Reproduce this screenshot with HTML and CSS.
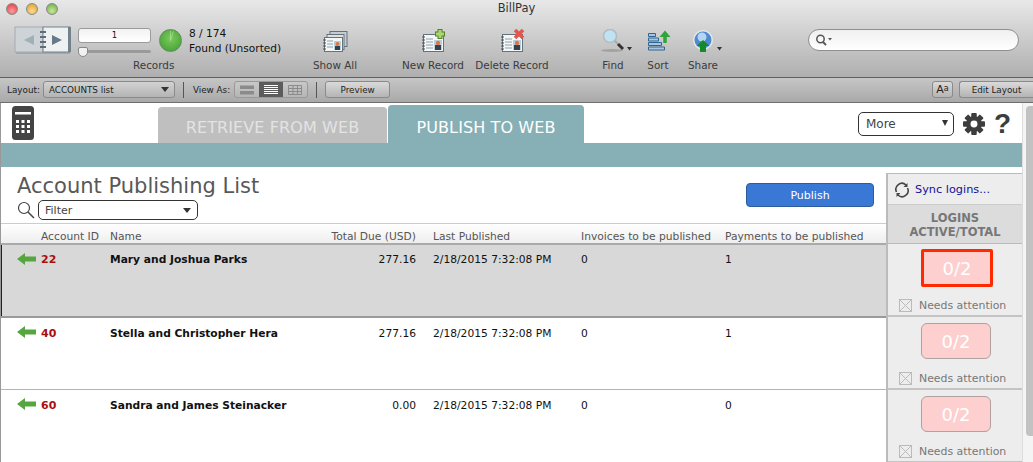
FILE: index.html
```html
<!DOCTYPE html>
<html lang="en">
<head>
<meta charset="utf-8">
<title>BillPay</title>
<link rel="stylesheet" href="styles.css">
</head>
<body>
<header class="titlebar">
  <div class="lights"><i class="light red"></i><i class="light amber"></i><i class="light green"></i></div>
  <div class="title">BillPay</div>
  <div class="tools">
    <svg class="book" viewBox="0 0 58 28"><path d="M2 26h54v2H2z" fill="#8f979c" opacity=".6"/><rect x="1" y="1" width="28" height="25" fill="#cdd3d6" stroke="#a3acb3"/><rect x="29" y="1" width="27" height="25" fill="#eef1f2" stroke="#71828d"/><rect x="54" y="1" width="3" height="25" fill="#71828d"/><path d="M20 9 10 14l10 5z" fill="#a3afb7"/><path d="M38 9l10 5-10 5z" fill="#66798a"/><path d="M26 6h6M26 11h6M26 16h6M26 21h6" stroke="#5f6d77" stroke-width="2"/></svg>
    <div class="rec-col">
      <div class="rec-input">1</div>
      <div class="slider"><i class="knob"></i></div>
      <div class="tool-label rec-label">Records</div>
    </div>
    <div class="pie"><svg class="pie-line" viewBox="0 0 22 22"><path d="M11 11V1M11 11l3-9.500" stroke="#a8e08c" stroke-width=".8" fill="none"/></svg></div>
    <div class="found"><div>8 / 174</div><div>Found (Unsorted)</div></div>
    <div class="tool t-showall">
      <svg class="ticon" viewBox="0 0 26 24"><rect x="8" y="2.500" width="17" height="15" fill="#c6ccd0" stroke="#66727a"/><rect x="5" y="5.500" width="17" height="15" fill="#dde1e3" stroke="#66727a"/><rect x="2.500" y="8.500" width="18" height="14" fill="#f5f6f6" stroke="#66727a"/><path d="M1 11h3M1 14h3M1 17h3M1 20h3" stroke="#47535c"/><path d="M5 12h6M5 15h6M5 18h6" stroke="#8aa0b0"/><rect x="12" y="12" width="7" height="9" fill="#b9cfdc"/><rect x="13" y="17" width="5" height="4" fill="#33424f"/><circle cx="15.500" cy="15" r="2" fill="#d9794a"/></svg>
      <span class="tool-label">Show All</span>
    </div>
    <div class="tool t-new">
      <svg class="ticon" viewBox="0 0 26 24"><rect x="3.500" y="5.500" width="20" height="17" fill="#f5f6f6" stroke="#66727a"/><path d="M2 8h3M2 11h3M2 14h3M2 17h3M2 20h3" stroke="#47535c"/><path d="M6 10h7M6 13h7M6 16h7M6 19h7" stroke="#8aa0b0"/><rect x="14" y="11" width="8" height="10" fill="#b9cfdc"/><rect x="15" y="16" width="6" height="5" fill="#33424f"/><circle cx="18" cy="14" r="2.200" fill="#d9794a"/><path d="M20 0v10M15 5h10" stroke="#5a7f2c" stroke-width="5"/><path d="M20 1v8M16 5h8" stroke="#a7d86e" stroke-width="3"/></svg>
      <span class="tool-label">New Record</span>
    </div>
    <div class="tool t-del">
      <svg class="ticon" viewBox="0 0 26 24"><rect x="3.500" y="5.500" width="20" height="17" fill="#f5f6f6" stroke="#66727a"/><path d="M2 8h3M2 11h3M2 14h3M2 17h3M2 20h3" stroke="#47535c"/><path d="M6 10h7M6 13h7M6 16h7M6 19h7" stroke="#8aa0b0"/><rect x="14" y="11" width="8" height="10" fill="#b9cfdc"/><rect x="15" y="16" width="6" height="5" fill="#33424f"/><circle cx="18" cy="14" r="2.200" fill="#d9794a"/><path d="m16 1 8 8M24 1l-8 8" stroke="#e2564c" stroke-width="3.600"/></svg>
      <span class="tool-label">Delete Record</span>
    </div>
    <div class="tool t-find">
      <svg class="ticon wide" viewBox="0 0 38 24"><ellipse cx="18" cy="21.500" rx="11" ry="1.500" fill="#8c8c8c" opacity=".6"/><circle cx="16" cy="7" r="6.500" fill="#bfe3f2" stroke="#b4bcc0" stroke-width="1.600"/><path d="m21 12 3 3" stroke="#aaa" stroke-width="2"/><path d="m24 15 5 5" stroke="#333" stroke-width="3"/><path d="M33 18h5l-2.500 3.500z" fill="#333"/></svg>
      <span class="tool-label">Find</span>
    </div>
    <div class="tool t-sort">
      <svg class="ticon" viewBox="0 0 26 24"><path d="M3.500 4.500h7v3h-7zM3.500 9h10v3h-10zM3.500 13.500h13v3h-13zM3.500 18h16v3h-16z" fill="#a6c6e4" stroke="#33668f"/><path d="M20 14V5" stroke="#2ea53a" stroke-width="3.500"/><path d="M14.500 8 20 1.500 25.500 8z" fill="#2ea53a"/></svg>
      <span class="tool-label">Sort</span>
    </div>
    <div class="tool t-share">
      <svg class="ticon wide" viewBox="0 0 38 24"><circle cx="19" cy="11" r="10" fill="#e4e8ea"/><circle cx="19" cy="11" r="8.500" fill="#4f8ad0"/><circle cx="18" cy="8" r="4.500" fill="#b5d6f2"/><path d="M19 11l-6.500 6h3.500v6h6v-6h3.500z" fill="#148a2a"/><path d="M33 18h5l-2.500 3.500z" fill="#333"/></svg>
      <span class="tool-label">Share</span>
    </div>
    <div class="search">
      <svg class="search-ico" viewBox="0 0 18 12"><circle cx="5.500" cy="5" r="3.700" fill="none" stroke="#555" stroke-width="1.500"/><path d="m8 8 3 3" stroke="#555" stroke-width="1.800"/><path d="M13 4h4l-2 2.500z" fill="#555"/></svg>
    </div>
  </div>
</header>

<nav class="layoutbar">
  <span class="lb-text">Layout:</span>
  <div class="lb-select"><span>ACCOUNTS list</span><i class="caret"></i></div>
  <i class="sep"></i>
  <span class="lb-text">View As:</span>
  <div class="seg">
    <span class="seg-b"><svg viewBox="0 0 14 10" class="seg-i"><path d="M0 .500h14v3.500H0zM0 6h14v3.500H0z" fill="#8b8b8b"/></svg></span>
    <span class="seg-b on"><svg viewBox="0 0 14 10" class="seg-i"><path d="M0 .500h14M0 2.500h14M0 4.500h14M0 6.500h14M0 8.500h14" stroke="#fff"/></svg></span>
    <span class="seg-b"><svg viewBox="0 0 14 10" class="seg-i"><path d="M.500.500h13v9H.500zM.500 3.500h13M.500 6.500h13M5 .500v9M9.500.500v9" fill="none" stroke="#8b8b8b"/></svg></span>
  </div>
  <i class="sep"></i>
  <div class="lb-btn preview">Preview</div>
  <div class="lb-right">
    <div class="lb-btn aa">A<span class="aa-small">a</span></div>
    <div class="lb-btn edit">Edit Layout</div>
  </div>
</nav>

<div class="content">
  <main class="page">
    <div class="tabrow">
      <svg class="calc" viewBox="0 0 22 34"><rect width="22" height="34" rx="3.500" fill="#444"/><rect x="3" y="6" width="16" height="2.500" fill="#fff"/><g fill="#fff"><rect x="4" y="14" width="3" height="3"/><rect x="9.500" y="14" width="3" height="3"/><rect x="15" y="14" width="3" height="3"/><rect x="4" y="19" width="3" height="3"/><rect x="9.500" y="19" width="3" height="3"/><rect x="15" y="19" width="3" height="3"/><rect x="4" y="24" width="3" height="3"/><rect x="9.500" y="24" width="3" height="3"/><rect x="15" y="24" width="3" height="3"/></g></svg>
      <div class="tab off">RETRIEVE FROM WEB</div>
      <div class="tab active">PUBLISH TO WEB</div>
      <div class="top-right">
        <div class="more"><span>More</span><i class="caret"></i></div>
        <svg class="gear" viewBox="0 0 24 24"><g fill="#3d3d3d"><rect x="9" y="0" width="6" height="24" rx="1"/><rect x="9" y="0" width="6" height="24" rx="1" transform="rotate(45 12 12)"/><rect x="9" y="0" width="6" height="24" rx="1" transform="rotate(90 12 12)"/><rect x="9" y="0" width="6" height="24" rx="1" transform="rotate(135 12 12)"/><circle cx="12" cy="12" r="8.500"/></g><circle cx="12" cy="12" r="3.800" fill="#fff"/></svg>
        <span class="help">?</span>
      </div>
    </div>
    <div class="band"></div>
    <div class="listhead">
      <div class="lh-left">
        <h1>Account Publishing List</h1>
        <div class="filter-row">
          <svg class="mag" viewBox="0 0 18 18"><circle cx="7" cy="7" r="5.500" fill="none" stroke="#444" stroke-width="1.200"/><path d="m11 11 6 6" stroke="#444" stroke-width="1.500"/></svg>
          <div class="filter"><span>Filter</span><i class="caret"></i></div>
        </div>
      </div>
      <div class="publish">Publish</div>
    </div>
    <div class="row cols head">
      <span class="c-id">Account ID</span><span class="c-name">Name</span><span class="c-due">Total Due (USD)</span><span class="c-date">Last Published</span><span class="c-inv">Invoices to be published</span><span class="c-pay">Payments to be published</span>
    </div>
    <div class="row cols rec sel">
      <svg class="arrow" viewBox="0 0 19 12"><path d="M0 6 8 0v3.500h11v5H8V12z" fill="#55a63e"/></svg>
      <span class="c-id num">22</span><span class="c-name nm">Mary and Joshua Parks</span><span class="c-due">277.16</span><span class="c-date">2/18/2015 7:32:08 PM</span><span class="c-inv">0</span><span class="c-pay">1</span>
    </div>
    <div class="row cols rec">
      <svg class="arrow" viewBox="0 0 19 12"><path d="M0 6 8 0v3.500h11v5H8V12z" fill="#55a63e"/></svg>
      <span class="c-id num">40</span><span class="c-name nm">Stella and Christopher Hera</span><span class="c-due">277.16</span><span class="c-date">2/18/2015 7:32:08 PM</span><span class="c-inv">0</span><span class="c-pay">1</span>
    </div>
    <div class="row cols rec last">
      <svg class="arrow" viewBox="0 0 19 12"><path d="M0 6 8 0v3.500h11v5H8V12z" fill="#55a63e"/></svg>
      <span class="c-id num">60</span><span class="c-name nm">Sandra and James Steinacker</span><span class="c-due">0.00</span><span class="c-date">2/18/2015 7:32:08 PM</span><span class="c-inv">0</span><span class="c-pay">0</span>
    </div>
    <aside class="side">
      <div class="sync">
        <svg class="sync-i" viewBox="0 0 16 16"><path d="M2.500 10A6 6 0 0 1 12 3M13.500 6A6 6 0 0 1 4 13" fill="none" stroke="#444" stroke-width="1.600"/><path d="M13.500 1v4h-4zM2.500 15v-4h4z" fill="#444"/></svg>
        <span>Sync logins...</span>
      </div>
      <div class="logins">LOGINS<br>ACTIVE/TOTAL</div>
      <div class="cell">
        <div class="badge focus">0/2</div>
        <div class="need"><i class="cb"></i>Needs attention</div>
      </div>
      <div class="cell">
        <div class="badge">0/2</div>
        <div class="need"><i class="cb"></i>Needs attention</div>
      </div>
      <div class="cell">
        <div class="badge">0/2</div>
        <div class="need"><i class="cb"></i>Needs attention</div>
      </div>
    </aside>
  </main>
  <div class="scroll"><i class="thumb"></i></div>
</div>
</body>
</html>
```
FILE: styles.css
```css
* { box-sizing: border-box; }
html, body { margin: 0; padding: 0; }
body { width: 1033px; height: 462px; overflow: hidden; background: #fff; font-family: "DejaVu Sans", "Open Sans", sans-serif; color: #111; }
i { display: block; font-style: normal; }

.titlebar { position: relative; height: 78px; background: linear-gradient(#e8e8e8, #afafaf); border-bottom: 1px solid #5f5f5f; }
.lights { position: absolute; left: 6px; top: 3px; display: flex; gap: 8px; }
.light { width: 12px; height: 12px; border-radius: 50%; border: 1px solid #8a8a8a; }
.red { background: radial-gradient(circle at 50% 70%, #ff9a9a, #d93a40); }
.amber { background: radial-gradient(circle at 50% 70%, #ffdc8a, #d89a2a); }
.green { background: radial-gradient(circle at 50% 70%, #c6e89a, #6aa83e); }
.title { text-align: center; font-size: 11.500px; line-height: 17px; color: #333; }
.tools { position: relative; height: 60px; }
.book { position: absolute; left: 14px; top: 9px; width: 58px; height: 28px; }
.rec-col { position: absolute; left: 78px; top: 11px; width: 73px; }
.rec-input { height: 15px; background: linear-gradient(#f2f2f2, #fff); border: 1px solid #9a9a9a; border-radius: 3px; font-size: 8.500px; line-height: 13px; text-align: center; }
.slider { position: relative; height: 3px; margin-top: 7px; background: #9a9a9a; border-radius: 2px; }
.knob { position: absolute; left: 0; top: -3px; width: 10px; height: 10px; background: #f2f2f2; border: 1px solid #888; border-radius: 2px 2px 5px 5px; }
.tool-label { font-size: 10.400px; line-height: 14px; color: #3b3b3b; white-space: nowrap; }
.rec-label { position: absolute; left: 55px; top: 30px; }
.pie { position: absolute; left: 159px; top: 12px; width: 23px; height: 23px; border-radius: 50%; background: radial-gradient(circle at 50% 40%, #7ccb5c, #3d9a33); border: 1px solid #5e8f56; }
.pie-line { display: block; width: 21px; height: 21px; }
.found { position: absolute; left: 189px; top: 9px; font-size: 10.600px; line-height: 15px; color: #111; }
.tool { position: absolute; top: 12px; display: flex; flex-direction: column; align-items: center; gap: 5px; width: 90px; transform: translateX(-45px); }
.ticon { width: 26px; height: 24px; }
.ticon.wide { width: 38px; height: 24px; }
.t-showall { left: 335px; }
.t-new { left: 433px; }
.t-del { left: 512px; }
.t-find { left: 613px; }
.t-sort { left: 658px; }
.t-share { left: 703px; }
.search { position: absolute; left: 808px; top: 12px; width: 211px; height: 22px; border: 1px solid #8f8f8f; border-radius: 11px; background: linear-gradient(#f0f0f0, #fff); padding: 4px 6px; }
.search-ico { display: block; width: 18px; height: 12px; }

.layoutbar { display: flex; align-items: center; height: 25px; padding: 0 0 1px 7px; background: linear-gradient(#c6c6c6, #a9a9a9); border-bottom: 1px solid #6e6e6e; font-size: 8.800px; color: #222; }
.lb-text { white-space: nowrap; }
.lb-select { display: flex; align-items: center; justify-content: space-between; width: 132px; height: 17px; margin-left: 3px; padding: 0 5px; border: 1px solid #8a8a8a; border-radius: 3px; background: linear-gradient(#d2d2d2, #b4b4b4); }
.caret { width: 0; height: 0; border-left: 4px solid transparent; border-right: 4px solid transparent; border-top: 5px solid #333; }
.sep { width: 1px; height: 16px; background: #555; margin: 0 9px 0 8px; }
.seg { display: flex; width: 74px; height: 17px; margin-left: 4px; border: 1px solid #999; border-radius: 3px; overflow: hidden; background: linear-gradient(#c8c8c8, #b6b6b6); }
.seg-b { flex: 1; display: flex; align-items: center; justify-content: center; }
.seg-b.on { background: #5c5c5c; }
.seg-i { width: 14px; height: 10px; }
.lb-btn { display: flex; align-items: center; justify-content: center; height: 17px; border: 1px solid #8a8a8a; border-radius: 3px; background: linear-gradient(#dadada, #b4b4b4); white-space: nowrap; }
.preview { width: 65px; margin-left: -1px; }
.lb-right { display: flex; gap: 6px; margin-left: auto; }
.aa { width: 21px; font-size: 11px; }
.aa-small { font-size: 8px; margin-bottom: 2px; }
.edit { width: 74px; border-radius: 3px 0 0 3px; border-right: 0; }

.content { display: flex; height: 359px; }
.page { position: relative; width: 1022px; border-left: 1px solid #999; overflow: hidden; }
.scroll { width: 11px; background: #f4f4f4; border-left: 1px solid #ddd; padding: 3px 0 0 3px; }
.thumb { width: 7px; height: 330px; background: #c2c2c2; border-radius: 4px 0 0 4px; }

.tabrow { display: flex; align-items: flex-end; height: 40px; }
.calc { width: 22px; height: 34px; margin: 0 0 3px 11px; }
.tab { display: flex; align-items: center; justify-content: center; border-radius: 4px 4px 0 0; font-size: 16px; letter-spacing: .1px; }
.tab.off { width: 229px; height: 36px; margin-left: 124px; padding-top: 4px; background: #bfbfbf; color: #e3e3e3; }
.tab.active { width: 196px; height: 38px; margin: 0 0 0 1px; padding-top: 6px; background: #86b0b5; color: #fff; }
.top-right { display: flex; align-items: center; margin-left: auto; height: 37px; padding: 0 12px 1px 0; }
.more { display: flex; align-items: center; justify-content: space-between; width: 96px; height: 24px; padding: 0 5px 0 7px; border: 1px solid #333; border-radius: 5px; font-size: 12px; color: #444; }
.more .caret { border-left-width: 3.500px; border-right-width: 3.500px; border-top-width: 6px; margin-top: -3px; }
.gear { width: 22px; height: 22px; margin-left: 9px; }
.help { width: 16px; margin-left: 9px; font: bold 28px/24px "Liberation Sans", sans-serif; color: #3d3d3d; text-align: center; }
.band { height: 24px; background: #86b0b5; }

.listhead { position: relative; height: 56px; padding-left: 16px; }
.listhead h1 { margin: 0; padding-top: 4px; height: 33px; font-size: 21px; font-weight: 400; line-height: 30px; color: #58585a; white-space: nowrap; }
.filter-row { display: flex; align-items: center; }
.mag { width: 18px; height: 18px; }
.filter { display: flex; align-items: center; justify-content: space-between; width: 160px; height: 20px; margin-left: 3px; padding: 0 6px; border: 1px solid #333; border-radius: 5px; font-size: 11px; color: #444; }
.publish { position: absolute; left: 745px; top: 16px; width: 128px; height: 24px; display: flex; align-items: center; justify-content: center; background: #3a78d6; border: 1px solid #2e5b9c; border-radius: 4px; color: #fff; font-size: 11px; }

.row { position: relative; font-size: 10.700px; }
.cols > span { position: absolute; top: 0; white-space: nowrap; }
.c-id { left: 40px; }
.c-name { left: 109px; }
.c-due { left: 299px; width: 116px; text-align: right; }
.c-date { left: 432px; }
.c-inv { left: 580px; }
.c-pay { left: 724px; }
.head { height: 22px; border-top: 1px solid #ccc; border-bottom: 2px solid #aaa; background: linear-gradient(#fff, #eee); color: #555; line-height: 26px; }
.rec { height: 72px; line-height: 32px; border-bottom: 1px solid #b5b5b5; width: 1021px; }
.rec.sel { height: 73px; line-height: 29px; background: #d8d8d8; border-bottom: 2px solid #9a9a9a; box-shadow: inset 1px 0 #222; }
.rec.last { border-bottom: 0; }
.arrow { position: absolute; left: 16px; top: 8px; width: 19px; height: 12px; }
.num { font-weight: 700; color: #a80f0f; font-size: 11px; }
.nm { font-weight: 700; color: #111; }

.side { position: absolute; left: 885px; top: 70px; bottom: 0; width: 136px; background: #ededed; border-left: 2px solid #bbb; }
.sync { display: flex; align-items: center; gap: 5px; height: 31px; padding: 1px 0 0 6px; border-top: 1px solid #bbb; color: #10109a; font-size: 11.300px; }
.sync-i { width: 16px; height: 16px; }
.logins { height: 40px; padding-top: 6px; background: #dcdcdc; border-top: 1px solid #ccc; border-bottom: 1px solid #bbb; font-size: 11.500px; font-weight: 700; line-height: 14px; text-align: center; color: #777; }
.cell { height: 73px; padding-top: 6px; border-bottom: 2px solid #c4c4c4; }
.badge { width: 70px; height: 36px; margin-left: 33px; display: flex; align-items: center; justify-content: center; background: #fdcfcf; border: 1px solid #b0a0a0; border-radius: 6px; color: #fff; font-size: 18px; }
.badge.focus { width: 72px; height: 38px; margin: -1px 0 -1px 33px; border: 3px solid #ff2a00; border-radius: 2px; }
.need { display: flex; align-items: center; gap: 7px; margin: 13px 0 0 11px; font-size: 10.900px; color: #777; white-space: nowrap; }
.cb { width: 13px; height: 13px; border: 1px solid #bbb; background: linear-gradient(45deg, transparent 47%, #bbb 47%, #bbb 53%, transparent 53%), linear-gradient(-45deg, transparent 47%, #bbb 47%, #bbb 53%, transparent 53%); }
```
